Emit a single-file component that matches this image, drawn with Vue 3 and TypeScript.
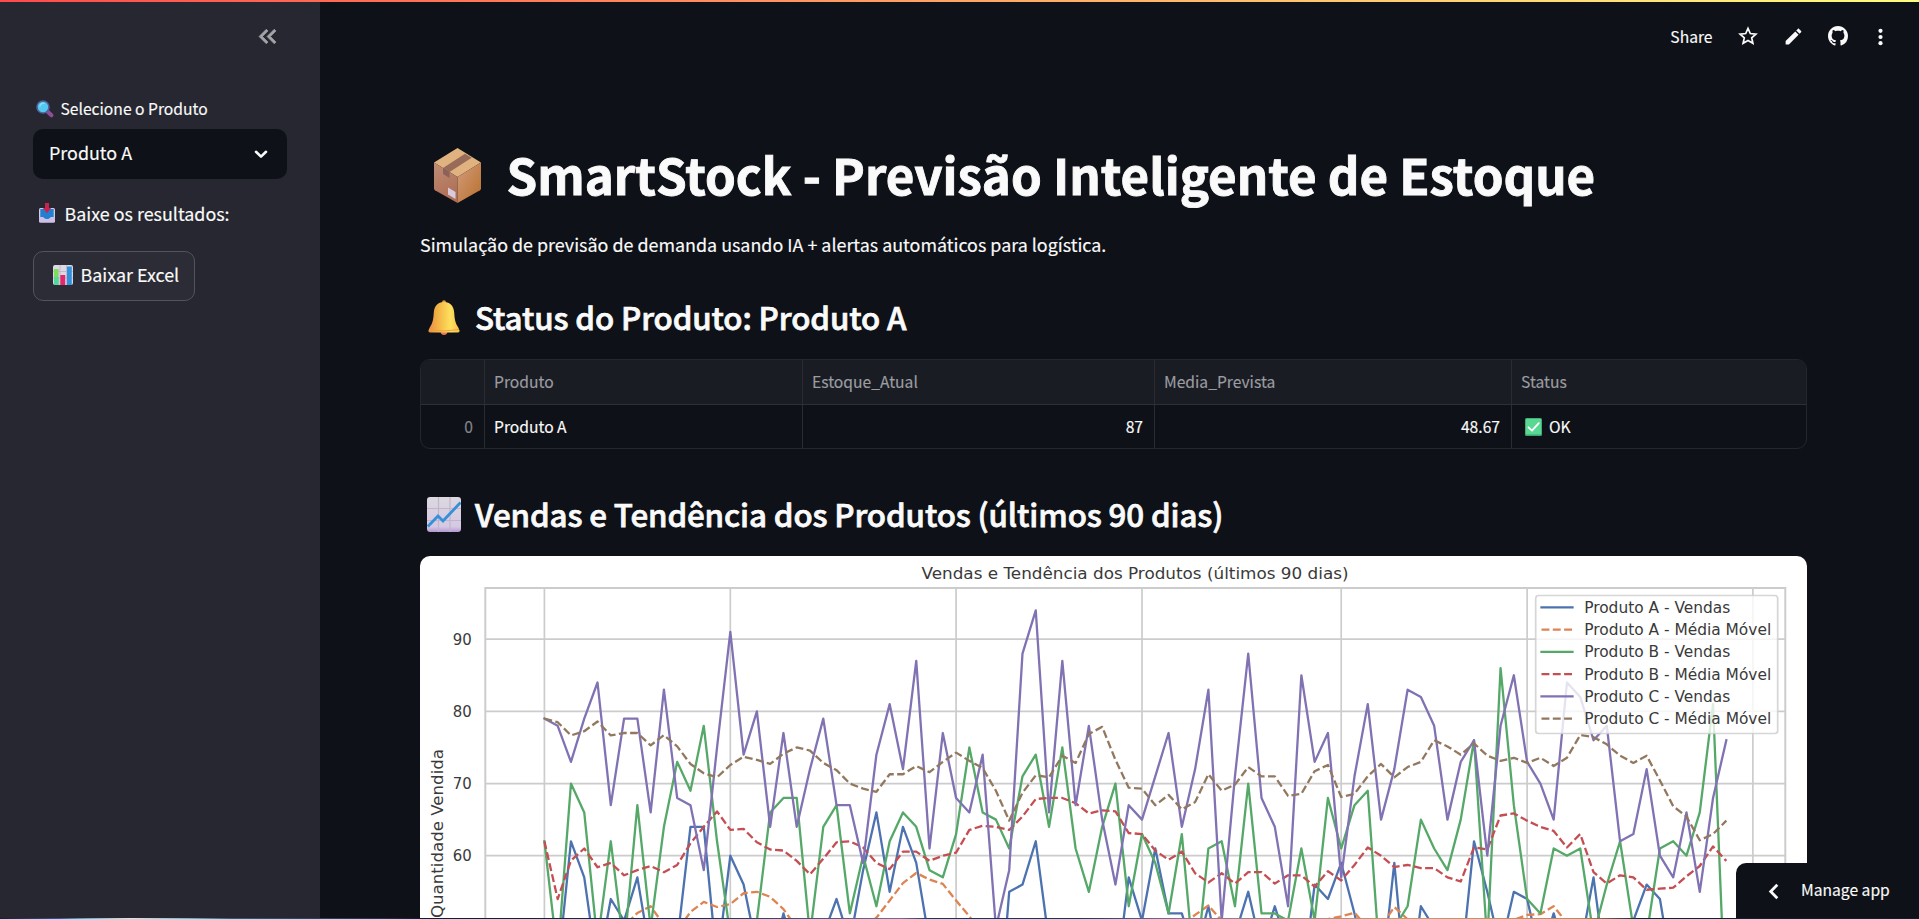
<script setup lang="ts">
interface Series {
  label: string
  color: string
  dashed: boolean
  values: number[]
}

const ORIGIN_X = 124.4
const DAY_WIDTH = 13.28
const UNIT = 7.217
const Y_AT_90 = 83.2

const xOf = (day: number): number => ORIGIN_X + day * DAY_WIDTH
const yOf = (value: number): number => Y_AT_90 + (90 - value) * UNIT

const movingAverage = (values: number[], window = 7): number[] =>
  values.map((_, i) => {
    const slice = values.slice(Math.max(0, i - window + 1), i + 1)
    return slice.reduce((sum, v) => sum + v, 0) / slice.length
  })

const salesA = [
  46, 44, 62, 57, 44, 54, 51, 57, 46, 42, 48, 64, 64, 45, 60, 56, 47, 44, 52, 46,
  44, 49, 54, 48, 58, 66, 55, 64, 59, 48, 45, 44, 46, 45, 32, 55, 56, 62, 48, 45,
  42, 46, 44, 42, 57, 51, 61, 52, 52, 46, 53, 44, 49, 55, 47, 53, 47, 41, 56, 54,
  59, 52, 44, 42, 59, 39, 53, 50, 46, 44, 62, 55, 47, 55, 54, 46, 52, 46, 47, 57,
  43, 45, 51, 56, 54, 43, 45, 44, 46, 43,
]
const averageA = [
  46, 45, 48, 49, 49.5, 50, 50.2, 52.07, 53, 50.4, 49.6, 52.2, 53.6, 52.9, 53.3, 54.8, 55, 54.3, 52.6, 50,
  49, 48.5, 48, 49, 50, 51.4, 53.8, 56.2, 57.6, 56.7, 56.1, 53.8, 51.6, 49, 47, 46, 46, 47, 48, 48,
  47, 47, 46, 46, 46, 47, 48, 49, 50.4, 51.8, 53.1, 51, 50, 50, 49, 49, 49, 49.5, 50.6, 51.2,
  51.6, 52.1, 50, 50.2, 52.9, 51.2, 49, 49, 49, 49, 49.5, 50, 50.4, 51.1, 51.8, 51.9, 53, 50.7, 49.5, 49,
  48, 48, 48, 49, 49, 49, 48, 48, 47, 46,
]
const salesB = [
  62, 46, 70, 66, 48, 62, 47, 67, 50, 64, 73, 69, 78, 62, 49, 51, 51, 66, 68, 68,
  49, 64, 67, 52, 60, 53, 62, 66, 64, 58, 57, 63, 75, 66, 65, 61, 71, 74, 64, 75,
  61, 55, 64, 70, 53, 63, 59, 52, 63, 43, 61, 62, 53, 70, 52, 52, 51, 61, 51, 68,
  61, 67, 69, 43, 50, 53, 65, 61, 58, 65, 76, 48, 86, 67, 54, 52, 61, 60, 61, 49,
  56, 62, 50, 49, 61, 62, 60, 66, 81, 36,
]
const salesC = [
  79, 78, 73, 79, 84, 67, 79, 79, 66, 83, 68, 67, 58, 75, 91, 74, 80, 64, 77, 64,
  72, 79, 67, 67, 59, 74, 81, 72, 87, 61, 77, 68, 66, 74, 50, 58, 88, 94, 66, 87,
  67, 78, 65, 56, 67, 65, 71, 77, 64, 72, 83, 51, 71, 88, 68, 64, 53, 85, 73, 77,
  57, 71, 81, 65, 72, 83, 82, 78, 65, 73, 76, 60, 78, 85, 73, 70, 65, 84, 82, 76,
  78, 62, 63, 72, 60, 57, 66, 55, 68, 76,
]

const series: Series[] = [
  { label: 'Produto A - Vendas', color: '#4c72b0', dashed: false, values: salesA },
  { label: 'Produto A - Média Móvel', color: '#dd8452', dashed: true, values: averageA },
  { label: 'Produto B - Vendas', color: '#55a868', dashed: false, values: salesB },
  { label: 'Produto B - Média Móvel', color: '#c44e52', dashed: true, values: movingAverage(salesB) },
  { label: 'Produto C - Vendas', color: '#8172b3', dashed: false, values: salesC },
  { label: 'Produto C - Média Móvel', color: '#937860', dashed: true, values: movingAverage(salesC) },
]

const pointsOf = (s: Series): string =>
  s.values.map((v, i) => `${xOf(i).toFixed(2)},${yOf(v).toFixed(2)}`).join(' ')

const dayTicks = [0, 14, 31, 45, 60, 74, 91]
const valueTicks = [90, 80, 70, 60]
</script>

<template>
  <div class="app">
    <aside class="sidebar">
      <div class="collapse">
        <svg width="29" height="29" viewBox="0 -960 960 960" fill="#a3a4a8" stroke="#a3a4a8" stroke-width="24">
          <path d="M440-240 200-480l240-240 56 56-183 184 183 184-56 56Zm264 0L464-480l240-240 56 56-183 184 183 184-56 56Z" />
        </svg>
      </div>
      <div class="field-label">
        <svg class="lens" width="18" height="18" viewBox="0 0 18 18">
          <path d="M11.500 11.500 15.400 15.300" stroke="#8b4f94" stroke-width="4" stroke-linecap="round" />
          <circle cx="7" cy="7" r="6" fill="#54c8ee" stroke="#51619b" stroke-width="1.600" />
          <path d="M4 6a3.500 3.500 0 0 1 4-2.600" fill="none" stroke="#8be0f7" stroke-width="1.300" stroke-linecap="round" />
        </svg>
        <span class="t-label">Selecione o Produto</span>
      </div>
      <div class="select">
        <span class="t-select">Produto A</span>
        <svg width="14" height="9" viewBox="0 0 14 9" fill="none" stroke="#fafafa" stroke-width="2.600" stroke-linecap="round" stroke-linejoin="round">
          <path d="M2 1.800 7 6.600l5-4.800" />
        </svg>
      </div>
      <div class="download-label">
        <svg width="16" height="20" viewBox="0 0 16 20">
          <rect x="0" y="5" width="16" height="14.500" rx="1.500" fill="#d4cde2" />
          <rect x="1.300" y="6" width="13.400" height="9" fill="#2280d2" />
          <path d="M0 14h4.500c.4 2 1.600 2.600 3.500 2.600s3.100-.6 3.500-2.600H16v4a1.500 1.500 0 0 1-1.500 1.500h-13A1.500 1.500 0 0 1 0 18z" fill="#cdbfe6" />
          <path d="M4.600 13.500h6.800c-.4 1.900-1.600 2.600-3.400 2.600s-3-.7-3.400-2.600z" fill="#2280d2" />
          <path d="M6 0h4v5h2.200L8 10.300 3.800 5H6z" fill="#c9234f" />
        </svg>
        <span class="t-body">Baixe os resultados:</span>
      </div>
      <button class="download" type="button">
        <svg width="20" height="20" viewBox="0 0 20 20">
          <rect width="20" height="20" rx="2" fill="#ddd8e4" />
          <path d="M0 6.500h20M0 13h20M7 0v20M13.500 0v20" stroke="#bbb4c4" stroke-width=".8" />
          <rect x="1" y="4" width="4.600" height="16" fill="#7ddc5c" />
          <rect x="1" y="12" width="4.600" height="8" fill="#54d79a" />
          <rect x="7.300" y="10" width="4.900" height="10" fill="#e3286d" />
          <rect x="14" y="1.500" width="4.800" height="18.500" fill="#3193e0" />
        </svg>
        <span class="t-button">Baixar Excel</span>
      </button>
    </aside>

    <main class="main">
      <header class="toolbar">
        <span class="share">Share</span>
        <svg class="star" width="20" height="20" viewBox="0 0 20 20" fill="none" stroke="#fafafa" stroke-width="1.700" stroke-linejoin="miter">
          <path d="M10 2.300 12.300 7.500 17.900 8.100 13.700 11.800 14.900 17.300 10 14.400 5.100 17.300 6.300 11.800 2.100 8.100 7.700 7.500z" />
        </svg>
        <svg class="pencil" width="21" height="21" viewBox="0 0 24 24" fill="#fafafa">
          <path d="M3 17.250V21h3.750L17.810 9.940l-3.750-3.750L3 17.250zM20.710 7.040c.39-.39.39-1.020 0-1.410l-2.340-2.340c-.39-.39-1.020-.39-1.410 0l-1.830 1.830 3.750 3.750 1.830-1.830z" />
        </svg>
        <svg class="github" width="20" height="20" viewBox="0 0 16 16" fill="#fafafa">
          <path d="M8 0C3.580 0 0 3.580 0 8c0 3.540 2.290 6.530 5.470 7.590.4.07.55-.17.55-.38 0-.19-.01-.82-.01-1.490-2.010.37-2.530-.49-2.690-.94-.09-.23-.48-.94-.82-1.130-.28-.15-.68-.52-.01-.53.63-.01 1.080.58 1.230.82.72 1.210 1.870.87 2.330.66.07-.52.28-.87.51-1.070-1.780-.2-3.640-.89-3.640-3.950 0-.87.31-1.590.82-2.150-.08-.2-.36-1.020.08-2.120 0 0 .67-.21 2.200.82.64-.18 1.320-.27 2-.27s1.360.09 2 .27c1.530-1.040 2.200-.82 2.200-.82.44 1.100.16 1.920.08 2.120.51.56.82 1.270.82 2.150 0 3.070-1.870 3.750-3.650 3.950.29.25.54.73.54 1.480 0 1.070-.01 1.930-.01 2.200 0 .21.15.46.55.38A8.010 8.010 0 0 0 16 8c0-4.420-3.580-8-8-8z" />
        </svg>
        <svg class="dots" width="5" height="18" viewBox="0 0 5 18" fill="#fafafa">
          <circle cx="2.500" cy="2.800" r="2.100" /><circle cx="2.500" cy="9" r="2.100" /><circle cx="2.500" cy="15.200" r="2.100" />
        </svg>
      </header>

      <section class="content">
        <h1 class="title">
          <svg class="box" width="47" height="55" viewBox="0 0 47 55">
            <defs>
              <linearGradient id="boxLeft" x1="0" y1="0" x2=".3" y2="1"><stop offset="0" stop-color="#c08d76" /><stop offset="1" stop-color="#ae6f55" /></linearGradient>
              <linearGradient id="boxRight" x1="0" y1="0" x2="1" y2="1"><stop offset="0" stop-color="#d39c7c" /><stop offset="1" stop-color="#b8702c" /></linearGradient>
            </defs>
            <path d="M23.500 0 47 14.500 23.500 29 0 14.500z" fill="#dfb27f" />
            <path d="M0 14.500 23.500 29v26L1 42.300Q0 41.700 0 40.500z" fill="url(#boxLeft)" />
            <path d="M47 14.500 23.500 29v26L46 42.300Q47 41.700 47 40.500z" fill="url(#boxRight)" />
            <path d="M9 20 31 5.800 37.700 9.800 15.500 24z" fill="#986b58" />
            <path d="M9 20l6.500 4v6L9 26z" fill="#8b6158" />
            <path d="M14 39.500l7.500 4.500v7L14 46.500z" fill="#d9cbdf" />
          </svg>
          <span class="t-title">SmartStock - Previsão Inteligente de Estoque</span>
        </h1>
        <p class="intro"><span>Simulação de previsão de demanda usando IA + alertas automáticos para logística.</span></p>

        <h2 class="heading status-heading">
          <svg class="bell" width="32" height="35" viewBox="0 0 32 35">
            <defs>
              <linearGradient id="bellBody" x1="0" y1="0" x2="1" y2="0"><stop offset="0" stop-color="#e88c45" /><stop offset=".35" stop-color="#f5b846" /><stop offset=".7" stop-color="#ffe05f" /><stop offset="1" stop-color="#f9bd4c" /></linearGradient>
            </defs>
            <circle cx="16" cy="31.500" r="3.400" fill="#e97855" />
            <circle cx="16" cy="2.200" r="2" fill="#e49a43" />
            <path d="M16 2C9.500 2 6.200 6.500 5.800 12.500 5.400 19 4.800 23 2 27L.4 30.500Q.2 32.500 2 32.500h28q1.800 0 1.600-2L30 27c-2.800-4-3.400-8-3.800-14.500C25.800 6.500 22.500 2 16 2z" fill="url(#bellBody)" />
            <path d="M1 29.500Q16 32.500 31 29.500" fill="none" stroke="#eda142" stroke-width="1" />
          </svg>
          <span>Status do Produto: Produto A</span>
        </h2>

        <div class="table">
          <div class="cell head"></div>
          <div class="cell head">Produto</div>
          <div class="cell head">Estoque_Atual</div>
          <div class="cell head">Media_Prevista</div>
          <div class="cell head">Status</div>
          <div class="cell num index">0</div>
          <div class="cell">Produto A</div>
          <div class="cell num">87</div>
          <div class="cell num">48.67</div>
          <div class="cell ok">
            <svg width="17" height="18" viewBox="0 0 17 18">
              <rect width="17" height="18" rx="1.500" fill="#3da36f" />
              <rect x=".8" y=".8" width="15.400" height="15.600" rx="1" fill="#58d892" />
              <path d="M3.500 9.300 7 12.700l6.800-7.500" fill="none" stroke="#fff" stroke-width="1.800" stroke-linecap="round" stroke-linejoin="round" />
            </svg>
            <span>OK</span>
          </div>
        </div>

        <h2 class="heading chart-heading">
          <svg class="trend" width="34" height="35" viewBox="0 0 34 35">
            <defs>
              <linearGradient id="trendPaper" x1="0" y1="0" x2="0" y2="1"><stop offset="0" stop-color="#dcd8df" /><stop offset=".85" stop-color="#d5c8e4" /><stop offset="1" stop-color="#b598cf" /></linearGradient>
            </defs>
            <rect width="34" height="35" rx="3" fill="url(#trendPaper)" />
            <path d="M0 11.500h34M0 23.500h34M11.500 0v35M23 0v35" stroke="#bfb6c9" stroke-width="1.200" />
            <path d="M.8 29.500 11 19l5 5L33.500 5.500" fill="none" stroke="#3590d8" stroke-width="2.800" />
          </svg>
          <span>Vendas e Tendência dos Produtos (últimos 90 dias)</span>
        </h2>

        <figure class="chart">
          <svg width="1387" height="380" viewBox="0 0 1387 380">
            <g stroke="#cccccc" stroke-width="1.700">
              <line v-for="d in dayTicks" :key="`d${d}`" :x1="xOf(d)" :x2="xOf(d)" y1="32" y2="380" />
              <line v-for="v in valueTicks" :key="`v${v}`" x1="65.300" x2="1365.300" :y1="yOf(v)" :y2="yOf(v)" />
            </g>
            <polyline
              v-for="s in series"
              :key="s.label"
              :points="pointsOf(s)"
              :stroke="s.color"
              :class="{ dashed: s.dashed }"
              class="line"
            />
            <path d="M65.300 380V32h1300v348" fill="none" stroke="#cccccc" stroke-width="2" />
            <text class="axis-text" x="501.500" y="22.700" font-size="16.400" textLength="427" lengthAdjust="spacingAndGlyphs">Vendas e Tendência dos Produtos (últimos 90 dias)</text>
            <text
              v-for="v in valueTicks"
              :key="`t${v}`"
              class="axis-text"
              x="51.800"
              :y="yOf(v) + 5.600"
              font-size="15"
              text-anchor="end"
              textLength="19"
              lengthAdjust="spacingAndGlyphs"
            >{{ v }}</text>
            <text class="axis-text" transform="translate(22.800 193) rotate(-90)" font-size="16.400" text-anchor="end" textLength="169" lengthAdjust="spacingAndGlyphs">Quantidade Vendida</text>
            <rect x="1115.700" y="39.500" width="242" height="138" rx="3" fill="#ffffff" fill-opacity=".8" stroke="#cccccc" stroke-opacity=".8" stroke-width="1.700" />
            <g v-for="(s, i) in series" :key="`l${s.label}`">
              <line
                x1="1121.500"
                x2="1152.500"
                :y1="51.300 + i * 22.270"
                :y2="51.300 + i * 22.270"
                :stroke="s.color"
                class="line"
                :class="{ dashed: s.dashed }"
              />
              <text
                class="axis-text"
                x="1164.200"
                :y="56.800 + i * 22.270"
                font-size="15.400"
                :textLength="s.dashed ? 187 : 146"
                lengthAdjust="spacingAndGlyphs"
              >{{ s.label }}</text>
            </g>
          </svg>
        </figure>
      </section>
    </main>

    <div class="top-strip"></div>
    <div class="manage">
      <svg width="11" height="17" viewBox="0 0 11 17" fill="none" stroke="#fafafa" stroke-width="2.800">
        <path d="M9.300 1.800 2.700 8.500l6.600 6.700" />
      </svg>
      <span class="t-manage">Manage app</span>
    </div>
    <div class="bottom-strip"></div>
  </div>
</template>

<style>
body {
  margin: 0;
  background: #0e1117;
}
</style>

<style scoped>
.app {
  position: relative;
  display: flex;
  width: 100%;
  height: 919px;
  overflow: hidden;
  background: #0e1117;
  color: #fafafa;
  font-family: "Noto Sans CJK SC", "Noto Sans CJK JP", "Noto Sans", sans-serif;
  font-size: 17.900px;
  -webkit-text-stroke: 0.15px currentColor;
}
svg {
  display: block;
  flex: none;
}
span {
  white-space: nowrap;
}
.sidebar {
  box-sizing: border-box;
  flex: none;
  width: 320px;
  padding: 0 33px;
  background: #262730;
}
.collapse {
  display: flex;
  justify-content: flex-end;
  padding: 22px 5px 0 0;
  height: 72px;
  box-sizing: border-box;
}
.field-label {
  display: flex;
  align-items: center;
  height: 30px;
  margin-top: 22px;
  padding-left: 3px;
  gap: 6.500px;
  line-height: 30px;
}
.t-label {
  font-size: 15.650px;
}
.select {
  display: flex;
  align-items: center;
  justify-content: space-between;
  box-sizing: border-box;
  height: 50px;
  margin-top: 5px;
  padding: 0 19px 0 16px;
  border-radius: 10px;
  background: #0e1117;
  line-height: 30px;
}
.t-select {
  padding-bottom: 4px;
}
.download-label {
  display: flex;
  align-items: center;
  height: 30px;
  margin-top: 19px;
  padding-left: 6px;
  gap: 9.500px;
  line-height: 30px;
}
.download {
  display: flex;
  align-items: center;
  box-sizing: border-box;
  width: 162px;
  height: 50px;
  margin-top: 23px;
  padding: 0 0 3px 19px;
  gap: 7.500px;
  border: 1px solid #52535b;
  border-radius: 10px;
  background: #2b2c36;
  color: #fafafa;
  font: inherit;
}
.t-button {
  padding-bottom: 2px;
}
.main {
  flex: 1;
  min-width: 0;
}
.toolbar {
  display: flex;
  align-items: center;
  justify-content: flex-end;
  box-sizing: border-box;
  height: 72px;
  padding-right: 36px;
}
.share {
  margin-right: 25.500px;
  padding-top: 2px;
  font-size: 15.650px;
  line-height: 30px;
}
.star {
  margin-right: 24.500px;
}
.pencil {
  margin-right: 24.500px;
}
.github {
  margin-right: 30px;
}
.dots {
  margin-top: 1px;
}
.content {
  width: 1387px;
  padding: 72px 0 0 100px;
}
.title {
  display: flex;
  align-items: center;
  height: 60px;
  margin: 0;
  padding-left: 14px;
  font-size: 49.240px;
  font-weight: 700;
  line-height: 60px;
  -webkit-text-stroke: 0.9px currentColor;
}
.box {
  margin: 3px 25.500px 0 0;
}
.intro {
  height: 30px;
  margin: 25px 0 0;
  line-height: 30px;
}
.heading {
  display: flex;
  align-items: center;
  height: 40px;
  font-size: 31.300px;
  font-weight: 500;
  letter-spacing: -0.110px;
  line-height: 40px;
  -webkit-text-stroke: 0.750px currentColor;
}
.status-heading {
  margin: 38px 0 0;
  padding-left: 8px;
}
.bell {
  margin: 1px 15px 0 0;
}
.chart-heading {
  margin: 45px 0 0;
  padding-left: 7px;
}
.trend {
  margin: 1px 14px 0 0;
}
.table {
  display: grid;
  grid-template-columns: 64px 318px 352px 357px 1fr;
  grid-template-rows: 45px 43px;
  margin-top: 22px;
  border: 1px solid #25272d;
  border-radius: 10px;
  overflow: hidden;
  font-size: 15.650px;
}
.cell {
  display: flex;
  align-items: center;
  box-sizing: border-box;
  padding: 0 11px 0 9px;
  border-right: 1px solid #2a2c32;
}
.cell:nth-child(5n) {
  border-right: 0;
}
.head {
  padding-bottom: 1px;
  border-bottom: 1px solid #2e3037;
  background: #1a1c24;
  color: #9c9da1;
}
.num {
  justify-content: flex-end;
}
.index {
  color: #84858a;
}
.ok {
  padding-left: 13px;
  gap: 7px;
}
.chart {
  margin: 22px 0 0;
  height: 380px;
  border-radius: 10px;
  overflow: hidden;
  background: #ffffff;
}
.line {
  fill: none;
  stroke-width: 2.300;
  stroke-linejoin: round;
  stroke-linecap: square;
}
.line.dashed {
  stroke-linecap: butt;
  stroke-dasharray: 7.900 3.400;
}
.axis-text {
  fill: #3a3a3a;
  font-family: "DejaVu Sans", sans-serif;
  -webkit-text-stroke: 0;
}
.top-strip {
  position: absolute;
  inset: 0 0 auto;
  height: 2px;
  background: linear-gradient(90deg, #ff4b4b, #fffd80);
}
.manage {
  position: absolute;
  right: 0;
  bottom: 0;
  display: flex;
  align-items: center;
  box-sizing: border-box;
  width: 183px;
  height: 56px;
  padding-left: 32px;
  gap: 22px;
  border-radius: 10px 0 0;
  background: #0e1117;
}
.t-manage {
  padding-bottom: 3px;
  font-size: 15.650px;
}
.bottom-strip {
  position: absolute;
  inset: auto 0 0;
  height: 1px;
  background: linear-gradient(90deg, #101f3c 0, #1560b0 60px, #36b8dc 85px, #c8efe8 130px, #48c4dc 190px, #10688c 230px, #0b3c60 380px, #0b1c38 420px, #0a3560 700px, #7b6a94 900px, #0b3c68 930px, #0b3c68 1080px, #8a7096 1180px, #c89a6c 1400px, #c08850 1580px, #0b2540 1640px, #0b1c30 100%);
}
</style>
